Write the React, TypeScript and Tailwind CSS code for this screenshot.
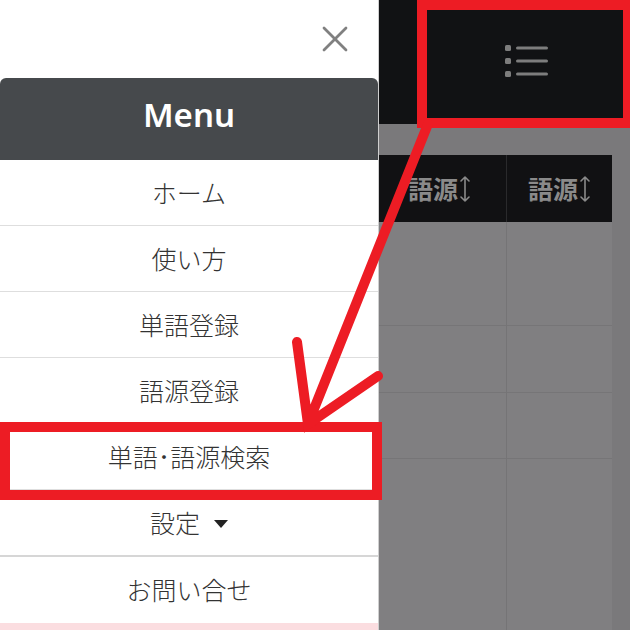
import { X } from 'lucide-react';

const jp = { fontFamily: '"Noto Sans CJK JP", "Noto Sans", sans-serif' };

const items = ['ホーム', '使い方', '単語登録', '語源登録', '単語･語源検索'];

function SortArrow() {
  return (
    <svg width="12" height="28" viewBox="0 0 12 28" className="ml-[1px]">
      <path d="M6 2 V26 M2 6 L6 2 L10 6 M2 22 L6 26 L10 22" fill="none" stroke="#8a8a8a" strokeWidth="1.6" strokeLinecap="round" strokeLinejoin="round" />
    </svg>
  );
}

function ListIcon() {
  return (
    <svg width="46" height="36" viewBox="0 0 46 36">
      {[4, 17, 30].map((y) => (
        <g key={y}>
          <rect x="1" y={y - 3} width="6" height="6" rx="1.5" fill="#7d7d7d" />
          <rect x="12" y={y - 1.5} width="32" height="3" rx="1.5" fill="#7d7d7d" />
        </g>
      ))}
    </svg>
  );
}

export default function App() {
  return (
    <div className="relative w-[630px] h-[630px] overflow-hidden flex bg-[#7a797b]" style={jp}>
      {/* side menu */}
      <div className="w-[379px] h-full flex flex-col bg-white border-r border-[#cfcfcf]">
        <div className="h-[78px] flex items-center justify-end pr-[21px]">
          <X className="w-[44px] h-[44px] text-[#808080]" strokeWidth={1.5} />
        </div>
        <div
          className="h-[82px] bg-[#46494c] rounded-t-[6px] flex items-center justify-center pb-[8px] text-white font-semibold text-[33px]"
          style={{ fontFamily: '"Noto Sans", "Open Sans", sans-serif' }}
        >
          Menu
        </div>
        {items.map((label) => (
          <div key={label} className="h-[66px] shrink-0 border-b border-[#dedede] flex items-center justify-center text-[25px] font-light text-[#333]">
            {label}
          </div>
        ))}
        <div className="h-[67px] shrink-0 border-b-2 border-[#d6d6d6] flex items-center justify-center gap-[14px] text-[25px] font-light text-[#333]">
          <span>設定</span>
          <span className="w-0 h-0 border-l-[7px] border-r-[7px] border-t-[8px] border-l-transparent border-r-transparent border-t-[#222] mt-[2px]" />
        </div>
        <div className="h-[66px] shrink-0 flex items-center justify-center text-[25px] font-light text-[#333]">お問い合せ</div>
        <div className="flex-1 bg-[#fbdde0]" />
      </div>

      {/* page behind */}
      <div className="flex-1 flex flex-col">
        <div className="h-[124px] bg-[#111214] flex items-center justify-end pr-[80px]">
          <ListIcon />
        </div>
        <div className="flex-1 pt-[31px] pr-[18px]">
          <div className="grid grid-cols-[128px_105px] h-[67px] bg-[#111113] text-[#8a8a8a] text-[25px] font-bold">
            <div className="flex items-center justify-center pr-[6px] border-r border-[#2a2a2c]">
              語源<SortArrow />
            </div>
            <div className="flex items-center justify-center">
              語源<SortArrow />
            </div>
          </div>
          <div className="grid grid-cols-[128px_105px] bg-[#807f81] h-full">
            <div className="border-r border-[#757476]">
              <div className="h-[104px] border-b border-[#767577]" />
              <div className="h-[67px] border-b border-[#767577]" />
              <div className="h-[66px] border-b border-[#767577]" />
            </div>
            <div>
              <div className="h-[104px] border-b border-[#767577]" />
              <div className="h-[67px] border-b border-[#767577]" />
              <div className="h-[66px] border-b border-[#767577]" />
            </div>
          </div>
        </div>
      </div>

      {/* annotations */}
      <div className="absolute left-[417px] top-0 w-[216px] h-[128px] border-[10px] border-[#ed1c24]" />
      <div className="absolute left-0 top-[422px] w-[382px] h-[78px] border-[10px] border-[#ed1c24]" />
      <svg className="absolute inset-0 pointer-events-none" width="630" height="630" viewBox="0 0 630 630">
        <path d="M428 124 L308 424 M297 342 L308 424 L378 376" fill="none" stroke="#ed1c24" strokeWidth="10" strokeLinecap="round" strokeLinejoin="miter" />
      </svg>
    </div>
  );
}
